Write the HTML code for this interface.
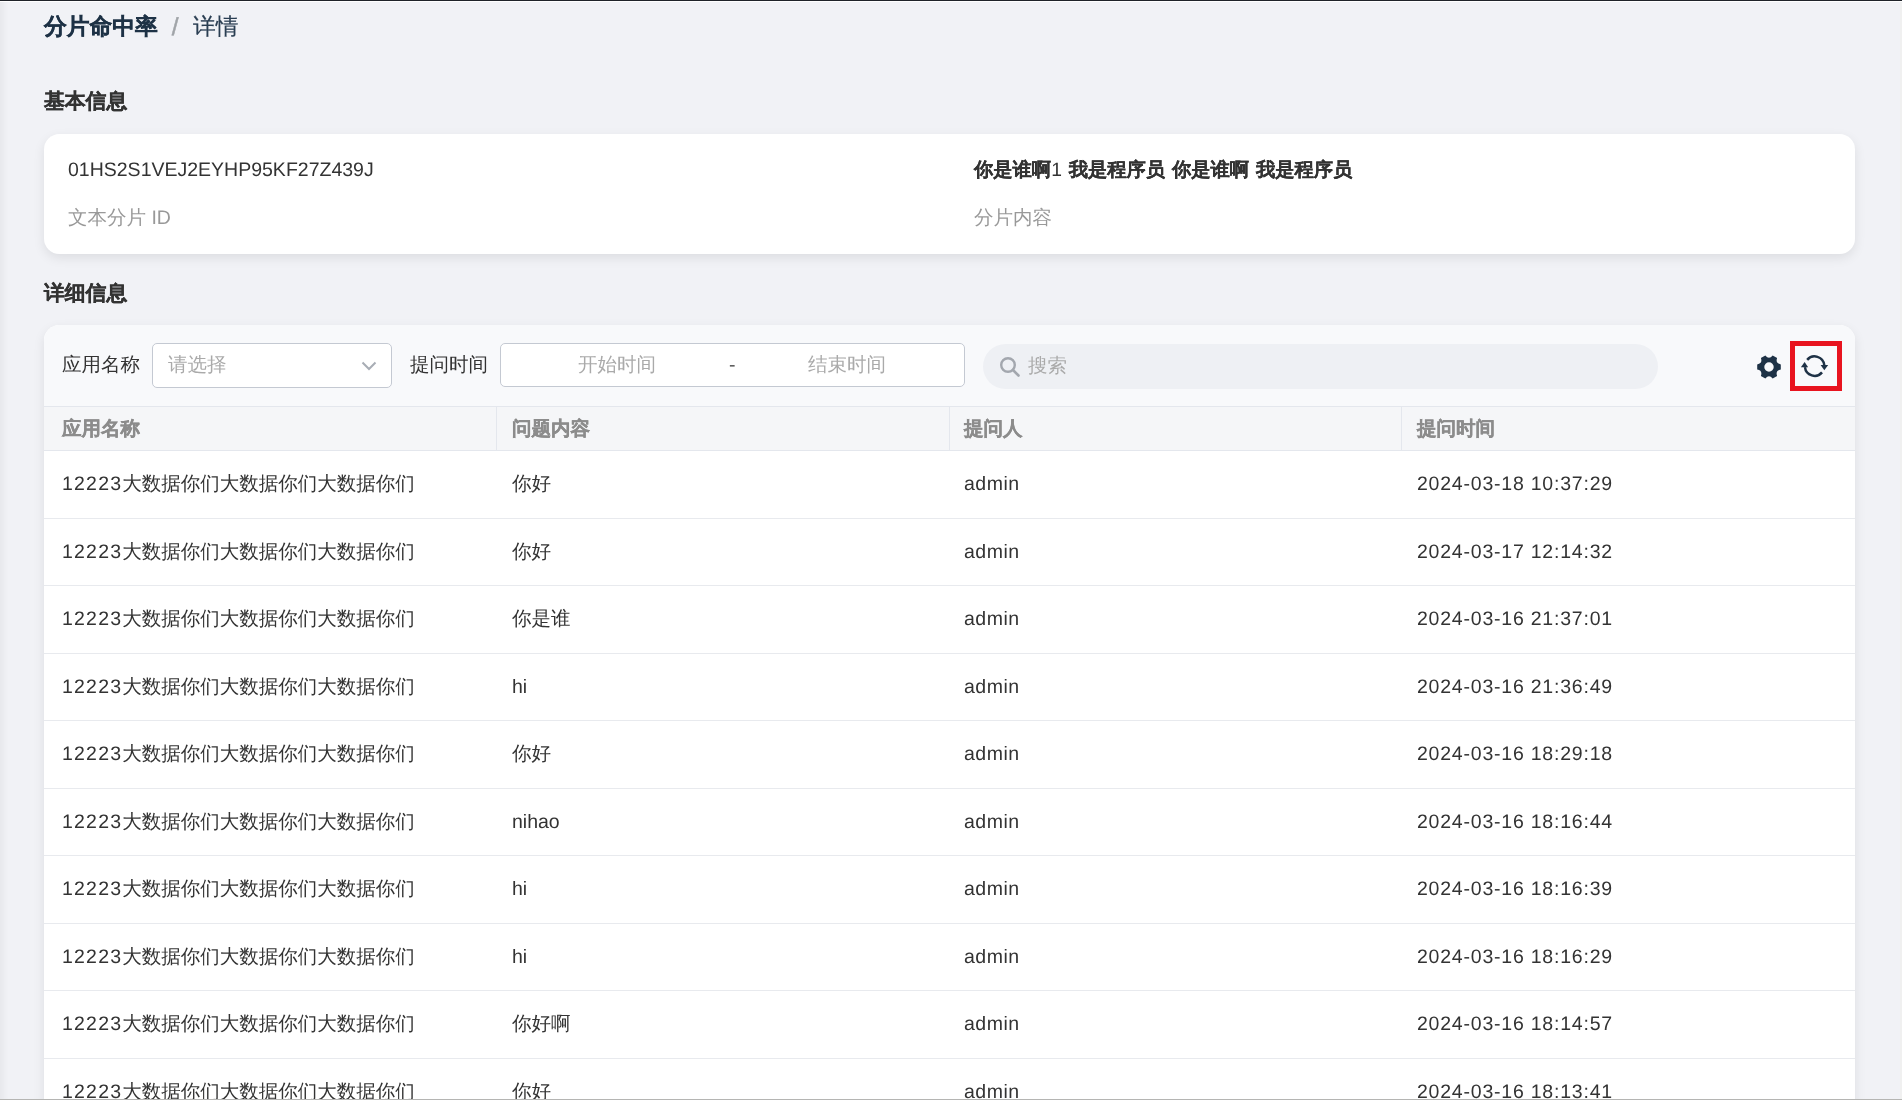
<!DOCTYPE html>
<html><head><meta charset="utf-8">
<style>
*{box-sizing:border-box;margin:0;padding:0}
html,body{width:1902px;height:1100px;overflow:hidden}
body{background:#f1f2f6;font-family:"Liberation Sans",sans-serif;color:#333;position:relative;text-rendering:geometricPrecision;-webkit-font-smoothing:antialiased}
.topline{position:absolute;left:0;top:0;width:1902px;height:1px;background:#1f2329}
.topline2{position:absolute;left:0;top:1px;width:1902px;height:1px;background:#fff}
.lshadow{position:absolute;left:0;top:2px;width:8px;height:1097px;background:linear-gradient(to right,rgba(0,0,0,0.04),rgba(0,0,0,0))}
.botline{position:absolute;left:0;top:1099px;width:1902px;height:1px;background:#b5b5b3;z-index:10}
.rstrip{position:absolute;right:0;top:2px;width:2px;height:1097px;background:#f0f0f0}
.abs{position:absolute;white-space:nowrap}
.crumb{top:10px;font-size:22.75px;line-height:32px;color:#1e3246}
.crumb b{font-weight:bold;-webkit-text-stroke:0.3px #1e3246}
.crumb .sep{color:#9aa0a6;margin:0 13px 0 15px}
.h2{font-size:20.8px;font-weight:bold;color:#333;line-height:28px;-webkit-text-stroke:0.3px #333}
.card{position:absolute;left:44px;width:1811px;background:#fff;border-radius:15.6px;box-shadow:0 4px 12px rgba(0,0,0,0.085)}
.v{font-size:19.5px;color:#333;line-height:26px}
.lbl{font-size:19.5px;color:#999;line-height:26px}
#card2{top:325px;height:830px;overflow:hidden}
.toolbar{position:absolute;left:0;top:0;width:1811px;height:82px;background:#f8f9fb;border-bottom:1px solid #e4e7ed}
.tl{font-size:19.5px;color:#333;line-height:26px}
.select{position:absolute;left:108px;top:18px;width:240px;height:45px;border:1px solid #c4c9d2;border-radius:5px;background:#fff}
.ph{font-size:19.5px;color:#aaa;line-height:26px}
.date{position:absolute;left:456px;top:18px;width:465px;height:44px;border:1px solid #c4c9d2;border-radius:5px;background:#fff}
.search{position:absolute;left:939px;top:19px;width:675px;height:45px;border-radius:22.5px;background:#eef0f4}
.redbox{position:absolute;left:1746px;top:16px;width:52px;height:50px;border:5px solid #e8141f}
.thead{position:absolute;left:0;top:82px;width:1811px;height:44px;background:#f5f6f8;border-bottom:1px solid #e4e7ed}
.th{position:absolute;top:0;font-size:19.5px;font-weight:bold;color:#8c8c8c;line-height:44px;-webkit-text-stroke:0.3px #8c8c8c}
.vsep{position:absolute;top:0;width:1px;height:44px;background:#e4e7ed}
.row{position:absolute;left:0;width:1811px;height:67.5px;border-bottom:1px solid #e8eaee;background:#fff}
.dg{letter-spacing:1.2px}.ad{letter-spacing:0.5px}.dt{letter-spacing:0.78px}
.td{position:absolute;top:0;font-size:19.5px;color:#333;line-height:67px}
</style></head>
<body><div id="wrap" style="position:absolute;left:0;top:0;width:1902px;height:1100px;will-change:transform">
<div class="topline"></div><div class="topline2"></div>
<div class="lshadow"></div><div class="rstrip"></div><div class="botline"></div>

<div class="abs crumb" style="left:44px"><b>分片命中率</b></div><div class="abs crumb" style="left:171.8px;top:12px;font-size:24.5px;color:#a0a4a8;-webkit-text-stroke:0.5px #a0a4a8">/</div><div class="abs crumb" style="left:193px;color:#2a3e52;-webkit-text-stroke:0.2px #2a3e52">详情</div>

<div class="abs h2" style="left:44px;top:88px">基本信息</div>
<div class="card" style="top:134px;height:120px">
  <div class="abs v" style="left:24px;top:23px">01HS2S1VEJ2EYHP95KF27Z439J</div>
  <div class="abs lbl" style="left:24px;top:71px">文本分片 ID</div>
  <div class="abs v" style="left:930px;top:24px;font-weight:bold;font-size:19.3px;word-spacing:1.5px;-webkit-text-stroke:0.15px #333">你是谁啊<span style="font-weight:normal;-webkit-text-stroke:0">1</span> 我是程序员 你是谁啊 我是程序员</div>
  <div class="abs lbl" style="left:930px;top:71px">分片内容</div>
</div>

<div class="abs h2" style="left:44px;top:279.5px">详细信息</div>
<div class="card" id="card2">
  <div class="toolbar">
    <div class="abs tl" style="left:18px;top:27px">应用名称</div>
    <div class="select">
      <div class="abs ph" style="left:15px;top:8px">请选择</div>
      <svg class="abs" style="left:207.5px;top:16.5px" width="16" height="10" viewBox="0 0 16 10"><path d="M1.5 1.5 L8 8 L14.5 1.5" fill="none" stroke="#a8adb5" stroke-width="2"/></svg>
    </div>
    <div class="abs tl" style="left:366px;top:27px">提问时间</div>
    <div class="date">
      <div class="abs ph" style="left:77px;top:8px">开始时间</div>
      <div class="abs ph" style="left:228px;top:8px;color:#555">-</div>
      <div class="abs ph" style="left:307px;top:8px">结束时间</div>
    </div>
    <div class="search">
      <svg class="abs" style="left:16px;top:12px" width="22" height="22" viewBox="0 0 22 22"><circle cx="9" cy="9" r="6.8" fill="none" stroke="#a3a7ae" stroke-width="2.4"/><path d="M14 14 L19.5 19.5" stroke="#a3a7ae" stroke-width="2.6" stroke-linecap="round"/></svg>
      <div class="abs ph" style="left:45px;top:9px">搜索</div>
    </div>
    <svg class="abs" style="left:1701.1px;top:18.2px" width="48" height="48" viewBox="-24 -24 48 48"><path fill="#1e3246" d="M11.80 -2.60 L11.80 2.60 Q6.13 3.54 8.15 8.92 L3.65 11.52 Q0.00 7.08 -3.65 11.52 L-8.15 8.92 Q-6.13 3.54 -11.80 2.60 L-11.80 -2.60 Q-6.13 -3.54 -8.15 -8.92 L-3.65 -11.52 Q-0.00 -7.08 3.65 -11.52 L8.15 -8.92 Q6.13 -3.54 11.80 -2.60Z M4.72 0 A4.72 4.72 0 1 0 -4.72 0 A4.72 4.72 0 1 0 4.72 0Z" fill-rule="evenodd"/></svg>
    <div class="redbox"></div>
    <svg class="abs" style="left:1751px;top:21px" width="40" height="40" viewBox="0 0 40 40"><g fill="none" stroke="#1e3246" stroke-width="2.5"><path d="M12.17 13.87 A9.7 9.7 0 0 1 29.25 19.2"/><path d="M27.03 26.33 A9.7 9.7 0 0 1 9.95 21.2"/></g><g fill="#1e3246"><path d="M25.6 19 L33.2 19 L29.3 24.2 Z"/><path d="M5.9 21.3 L13.2 21.3 L9.6 16 Z"/></g></svg>
  </div>
  <div class="thead">
    <div class="th" style="left:18px">应用名称</div>
    <div class="vsep" style="left:452px"></div>
    <div class="th" style="left:468px">问题内容</div>
    <div class="vsep" style="left:905px"></div>
    <div class="th" style="left:920px">提问人</div>
    <div class="vsep" style="left:1357px"></div>
    <div class="th" style="left:1373px">提问时间</div>
  </div>
    <div class="row" style="top:126.0px"><div class="td" style="left:18px"><span class="dg">12223</span>大数据你们大数据你们大数据你们</div><div class="td" style="left:468px">你好</div><div class="td" style="left:920px"><span class="ad">admin</span></div><div class="td" style="left:1373px"><span class="dt">2024-03-18 10:37:29</span></div></div>
  <div class="row" style="top:193.5px"><div class="td" style="left:18px"><span class="dg">12223</span>大数据你们大数据你们大数据你们</div><div class="td" style="left:468px">你好</div><div class="td" style="left:920px"><span class="ad">admin</span></div><div class="td" style="left:1373px"><span class="dt">2024-03-17 12:14:32</span></div></div>
  <div class="row" style="top:261.0px"><div class="td" style="left:18px"><span class="dg">12223</span>大数据你们大数据你们大数据你们</div><div class="td" style="left:468px">你是谁</div><div class="td" style="left:920px"><span class="ad">admin</span></div><div class="td" style="left:1373px"><span class="dt">2024-03-16 21:37:01</span></div></div>
  <div class="row" style="top:328.5px"><div class="td" style="left:18px"><span class="dg">12223</span>大数据你们大数据你们大数据你们</div><div class="td" style="left:468px">hi</div><div class="td" style="left:920px"><span class="ad">admin</span></div><div class="td" style="left:1373px"><span class="dt">2024-03-16 21:36:49</span></div></div>
  <div class="row" style="top:396.0px"><div class="td" style="left:18px"><span class="dg">12223</span>大数据你们大数据你们大数据你们</div><div class="td" style="left:468px">你好</div><div class="td" style="left:920px"><span class="ad">admin</span></div><div class="td" style="left:1373px"><span class="dt">2024-03-16 18:29:18</span></div></div>
  <div class="row" style="top:463.5px"><div class="td" style="left:18px"><span class="dg">12223</span>大数据你们大数据你们大数据你们</div><div class="td" style="left:468px">nihao</div><div class="td" style="left:920px"><span class="ad">admin</span></div><div class="td" style="left:1373px"><span class="dt">2024-03-16 18:16:44</span></div></div>
  <div class="row" style="top:531.0px"><div class="td" style="left:18px"><span class="dg">12223</span>大数据你们大数据你们大数据你们</div><div class="td" style="left:468px">hi</div><div class="td" style="left:920px"><span class="ad">admin</span></div><div class="td" style="left:1373px"><span class="dt">2024-03-16 18:16:39</span></div></div>
  <div class="row" style="top:598.5px"><div class="td" style="left:18px"><span class="dg">12223</span>大数据你们大数据你们大数据你们</div><div class="td" style="left:468px">hi</div><div class="td" style="left:920px"><span class="ad">admin</span></div><div class="td" style="left:1373px"><span class="dt">2024-03-16 18:16:29</span></div></div>
  <div class="row" style="top:666.0px"><div class="td" style="left:18px"><span class="dg">12223</span>大数据你们大数据你们大数据你们</div><div class="td" style="left:468px">你好啊</div><div class="td" style="left:920px"><span class="ad">admin</span></div><div class="td" style="left:1373px"><span class="dt">2024-03-16 18:14:57</span></div></div>
  <div class="row" style="top:733.5px"><div class="td" style="left:18px"><span class="dg">12223</span>大数据你们大数据你们大数据你们</div><div class="td" style="left:468px">你好</div><div class="td" style="left:920px"><span class="ad">admin</span></div><div class="td" style="left:1373px"><span class="dt">2024-03-16 18:13:41</span></div></div>
</div>
</div></body></html>
